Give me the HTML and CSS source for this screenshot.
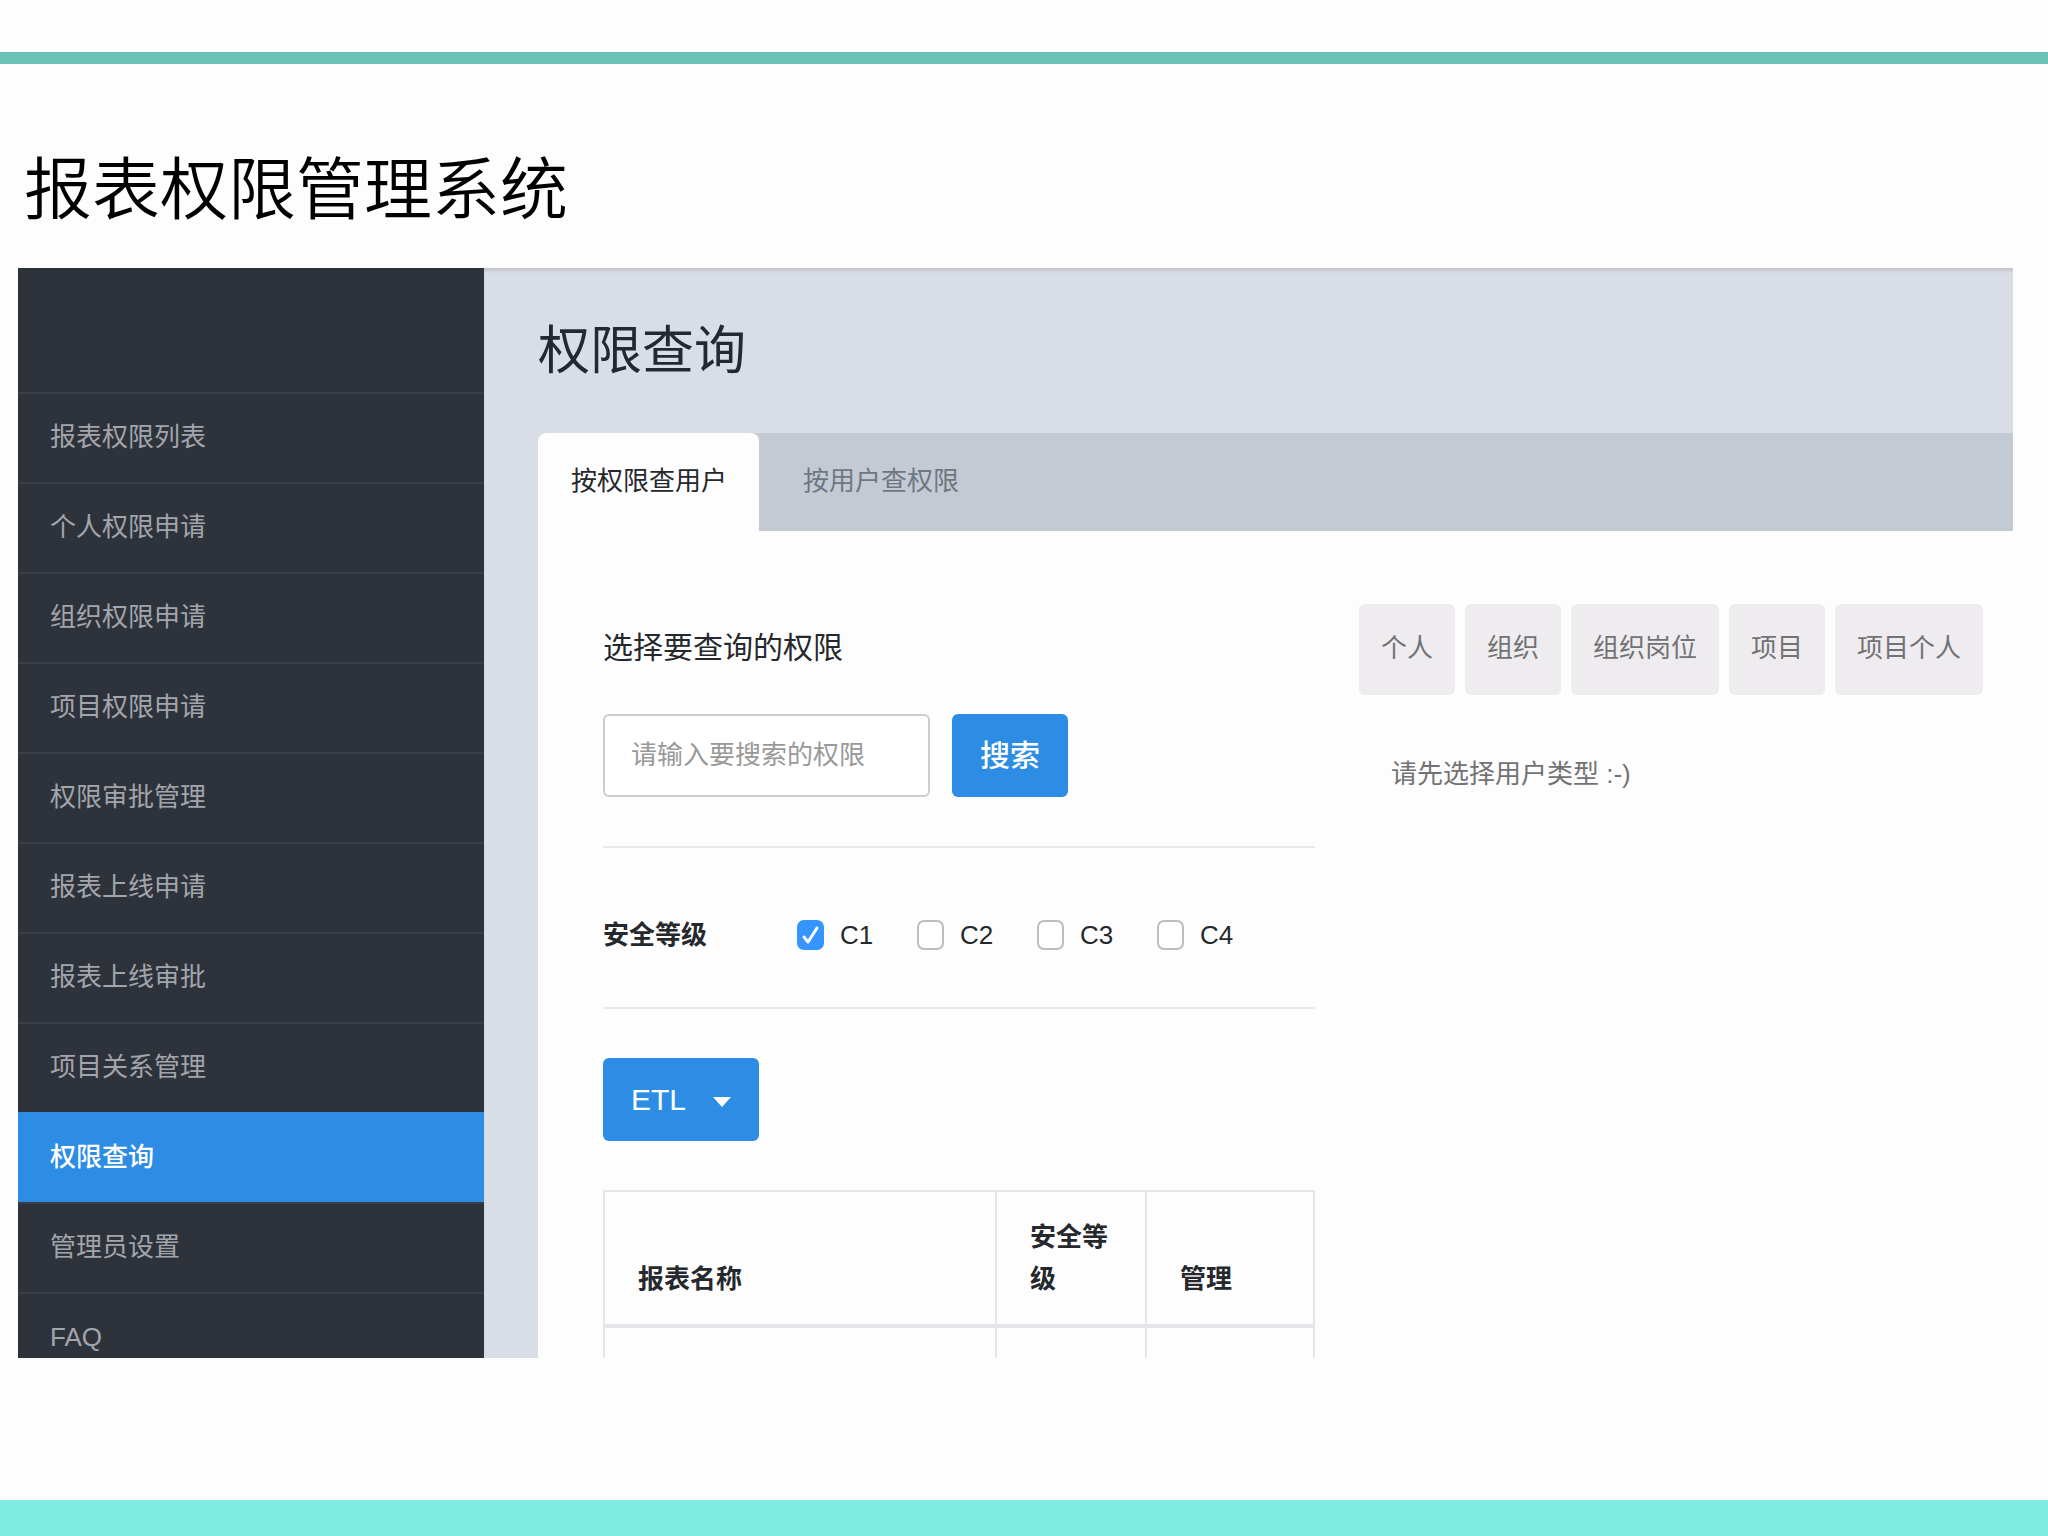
FILE: index.html
```html
<!DOCTYPE html>
<html lang="zh-CN">
<head>
    <meta charset="UTF-8">
    <meta name="viewport" content="width=device-width, initial-scale=1.0">
    <title>报表权限管理系统</title>
    <link rel="stylesheet" href="styles.css">
</head>
<body>
    <div class="top-line"></div>
    <h1 class="slide-title">报表权限管理系统</h1>

    <div class="app">
        <nav class="sidebar">
            <a href="#">报表权限列表</a>
            <a href="#">个人权限申请</a>
            <a href="#">组织权限申请</a>
            <a href="#">项目权限申请</a>
            <a href="#">权限审批管理</a>
            <a href="#">报表上线申请</a>
            <a href="#">报表上线审批</a>
            <a href="#">项目关系管理</a>
            <a href="#" class="active">权限查询</a>
            <a href="#">管理员设置</a>
            <a href="#">FAQ</a>
        </nav>

        <main class="main">
            <h2 class="page-title">权限查询</h2>
            <div class="tabs">
                <a href="#" class="tab active">按权限查用户</a>
                <a href="#" class="tab">按用户查权限</a>
            </div>

            <div class="content">
                <section class="query">
                    <label class="query-label" for="keyword">选择要查询的权限</label>
                    <form class="search">
                        <input type="text" id="keyword" placeholder="请输入要搜索的权限">
                        <button type="button" class="btn-search">搜索</button>
                    </form>

                    <div class="levels">
                        <strong>安全等级</strong>
                        <label><input type="checkbox" checked>C1</label>
                        <label><input type="checkbox">C2</label>
                        <label><input type="checkbox">C3</label>
                        <label><input type="checkbox">C4</label>
                    </div>

                    <div class="dropdown">
                        <select aria-label="报表类型">
                            <option>ETL</option>
                        </select>
                    </div>

                    <table class="reports">
                        <thead>
                            <tr>
                                <th class="col-name">报表名称</th>
                                <th class="col-level">安全等级</th>
                                <th class="col-manage">管理</th>
                            </tr>
                        </thead>
                        <tbody>
                            <tr>
                                <td></td>
                                <td></td>
                                <td></td>
                            </tr>
                        </tbody>
                    </table>
                </section>

                <section class="users">
                    <div class="user-types">
                        <button type="button">个人</button>
                        <button type="button">组织</button>
                        <button type="button">组织岗位</button>
                        <button type="button">项目</button>
                        <button type="button">项目个人</button>
                    </div>
                    <p class="hint">请先选择用户类型 :-)</p>
                </section>
            </div>
        </main>
    </div>

    <footer class="bottom-line"></footer>
</body>
</html>
```

FILE: styles.css
```css
* {
    box-sizing: border-box;
}
body {
    display: flex;
    flex-direction: column;
    height: 100vh;
    margin: 0;
    background-color: #fdfdfd;
    color: #25282c;
    font-family: "Liberation Sans", "Noto Sans CJK SC", sans-serif;
    font-size: 26px;
    line-height: 42px;
}
a {
    color: inherit;
    text-decoration: none;
}
button, input, select {
    font: inherit;
}
.top-line {
    flex: none;
    height: 12px;
    margin-top: 52px;
    background-color: #68c2b8;
}
.slide-title {
    margin: 76px 24px 28px;
    color: #000;
    font-size: 68px;
    font-weight: 350;
    line-height: 100px;
}
.app {
    display: flex;
    flex: 1;
    min-height: 0;
    margin: 0 35px 142px 18px;
    overflow: hidden;
}
.bottom-line {
    flex: none;
    height: 36px;
    background-color: #7eece3;
}

/* sidebar */
.sidebar {
    flex: none;
    width: 466px;
    padding-top: 124px;
    background-color: #2e333b;
    color: #a2a5ab;
}
.sidebar a {
    display: block;
    height: 90px;
    padding: 22px 32px;
    border-top: 2px solid #383d46;
}
.sidebar a.active {
    border-color: #2d8de5;
    background-color: #2d8de5;
    color: #fff;
    font-weight: 500;
}

/* main */
.main {
    flex: 1;
    padding-left: 54px;
    background-color: #d9dde5;
    box-shadow: inset 0 4px 3px -1px #c3c5ca;
}
.page-title {
    margin: 0;
    padding: 48px 0 47px;
    color: #232932;
    font-size: 52px;
    font-weight: 400;
    line-height: 70px;
}
.tabs {
    display: flex;
    background-color: #c3cad3;
    border-radius: 8px 0 0 0;
}
.tab {
    padding: 27px 44px 29px;
    color: #6f7782;
}
.tab.active {
    padding: 27px 32px 29px 33px;
    border-radius: 8px 8px 0 0;
    background-color: #fdfdfd;
    color: #25282c;
}
.content {
    display: grid;
    grid-template-columns: 1fr 624px;
    gap: 44px;
    padding: 73px 30px 0 65px;
    background-color: #fdfdfd;
}
.query-label {
    display: block;
    margin: 23px 0 45px;
    font-size: 30px;
}
.search {
    display: flex;
    gap: 22px;
    padding-bottom: 49px;
    border-bottom: 2px solid #e9e9ed;
}
.search input {
    width: 327px;
    height: 83px;
    padding: 0 26px;
    border: 2px solid #cbccd1;
    border-radius: 6px;
    background-color: #fff;
    color: #25282c;
}
.search input::placeholder {
    color: #999;
}
.btn-search {
    padding: 0 28px;
    border: none;
    border-radius: 6px;
    background-color: #2d8de5;
    color: #fff;
    font-size: 30px;
    font-weight: 500;
}
.levels {
    display: flex;
    align-items: center;
    height: 161px;
    padding-top: 14px;
    border-bottom: 2px solid #e9e9ed;
}
.levels strong {
    width: 194px;
}
.levels label {
    display: flex;
    align-items: center;
    gap: 16px;
    width: 120px;
}
.levels input {
    appearance: none;
    width: 27px;
    height: 30px;
    margin: 0;
    border: 2px solid #bdbdbf;
    border-radius: 7px;
    background: #fff center / 19px 22px no-repeat;
}
.levels input:checked {
    border-color: #3395fd;
    background-color: #3395fd;
    background-image: url("data:image/svg+xml,%3Csvg xmlns='http://www.w3.org/2000/svg' viewBox='0 0 19 22'%3E%3Cpath d='M3 13l4 5 9-14' fill='none' stroke='white' stroke-width='3' stroke-linecap='round' stroke-linejoin='round'/%3E%3C/svg%3E");
}
.dropdown {
    position: relative;
    width: 156px;
    margin: 49px 0;
}
.dropdown select {
    display: block;
    appearance: none;
    width: 100%;
    height: 83px;
    padding: 0 28px;
    border: none;
    border-radius: 6px;
    background-color: #2d8de5;
    color: #fff;
    font-size: 30px;
}
.dropdown::after {
    content: "";
    position: absolute;
    top: 39px;
    right: 28px;
    border: 9px solid transparent;
    border-top: 10px solid #fff;
    border-bottom: none;
    pointer-events: none;
}
.reports {
    width: 100%;
    border-collapse: collapse;
    table-layout: fixed;
}
.reports th, .reports td {
    padding: 24px 33px;
    border: 2px solid #e6e6ea;
    text-align: left;
    vertical-align: bottom;
}
.reports th {
    border-bottom-width: 4px;
}
.reports td {
    height: 90px;
}
.col-level {
    width: 150px;
}
.col-manage {
    width: 168px;
}

/* user types */
.user-types {
    display: flex;
    gap: 10px;
}
.user-types button {
    height: 91px;
    padding: 0 22px 4px;
    border: none;
    border-radius: 6px;
    background-color: #eeecef;
    color: #727275;
    white-space: nowrap;
}
.hint {
    margin: 58px 32px;
    color: #727275;
}
```
